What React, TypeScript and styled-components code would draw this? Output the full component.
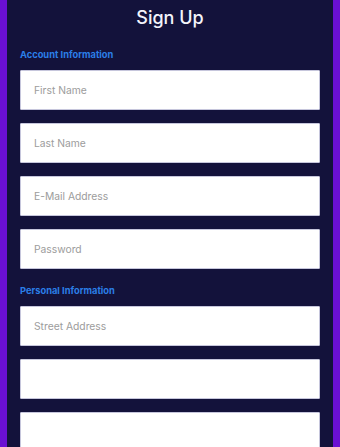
import styled, { createGlobalStyle } from 'styled-components';

const GlobalStyle = createGlobalStyle`
  html, body {
    margin: 0;
    padding: 0;
    background: #6a10d2;
  }
  * {
    box-sizing: border-box;
  }
`;

const Page = styled.div`
  min-height: 447px;
  padding: 0 7px;
  background: #6a10d2;
  font-family: Inter, "Noto Sans", sans-serif;
`;

const Panel = styled.form`
  min-height: 447px;
  background: #13123b;
  padding: 0 13px;
  display: flex;
  flex-direction: column;
  gap: 16px;
`;

const Title = styled.h1`
  margin: 0 0 -3px;
  height: 36px;
  line-height: 36px;
  text-align: center;
  font-size: 18px;
  font-weight: 500;
  color: #f4f4fb;
`;

const Section = styled.div`
  display: flex;
  flex-direction: column;
  gap: 13px;
`;

const SectionLabel = styled.div`
  margin-bottom: -4px;
  height: 12px;
  line-height: 12px;
  font-size: 9.3px;
  font-weight: 700;
  color: #2b7fe8;
`;

const Field = styled.input`
  display: block;
  width: 100%;
  height: 40px;
  border: 1px solid #c6c6dc;
  border-radius: 1px;
  background: #ffffff;
  padding: 0 13px;
  font-family: inherit;
  font-size: 10.3px;
  color: #333;
  outline: none;
  &::placeholder {
    color: #9c9c9c;
  }
`;

const account = ['First Name', 'Last Name', 'E-Mail Address', 'Password'];
const personal = ['Street Address', '', ''];

export default function App() {
  return (
    <Page>
      <GlobalStyle />
      <Panel onSubmit={(e) => e.preventDefault()}>
        <Title>Sign Up</Title>
        <Section>
          <SectionLabel>Account Information</SectionLabel>
          {account.map((p) => (
            <Field key={p} placeholder={p} type={p === 'Password' ? 'password' : 'text'} />
          ))}
        </Section>
        <Section>
          <SectionLabel>Personal Information</SectionLabel>
          {personal.map((p, i) => (
            <Field key={i} placeholder={p} />
          ))}
        </Section>
      </Panel>
    </Page>
  );
}
